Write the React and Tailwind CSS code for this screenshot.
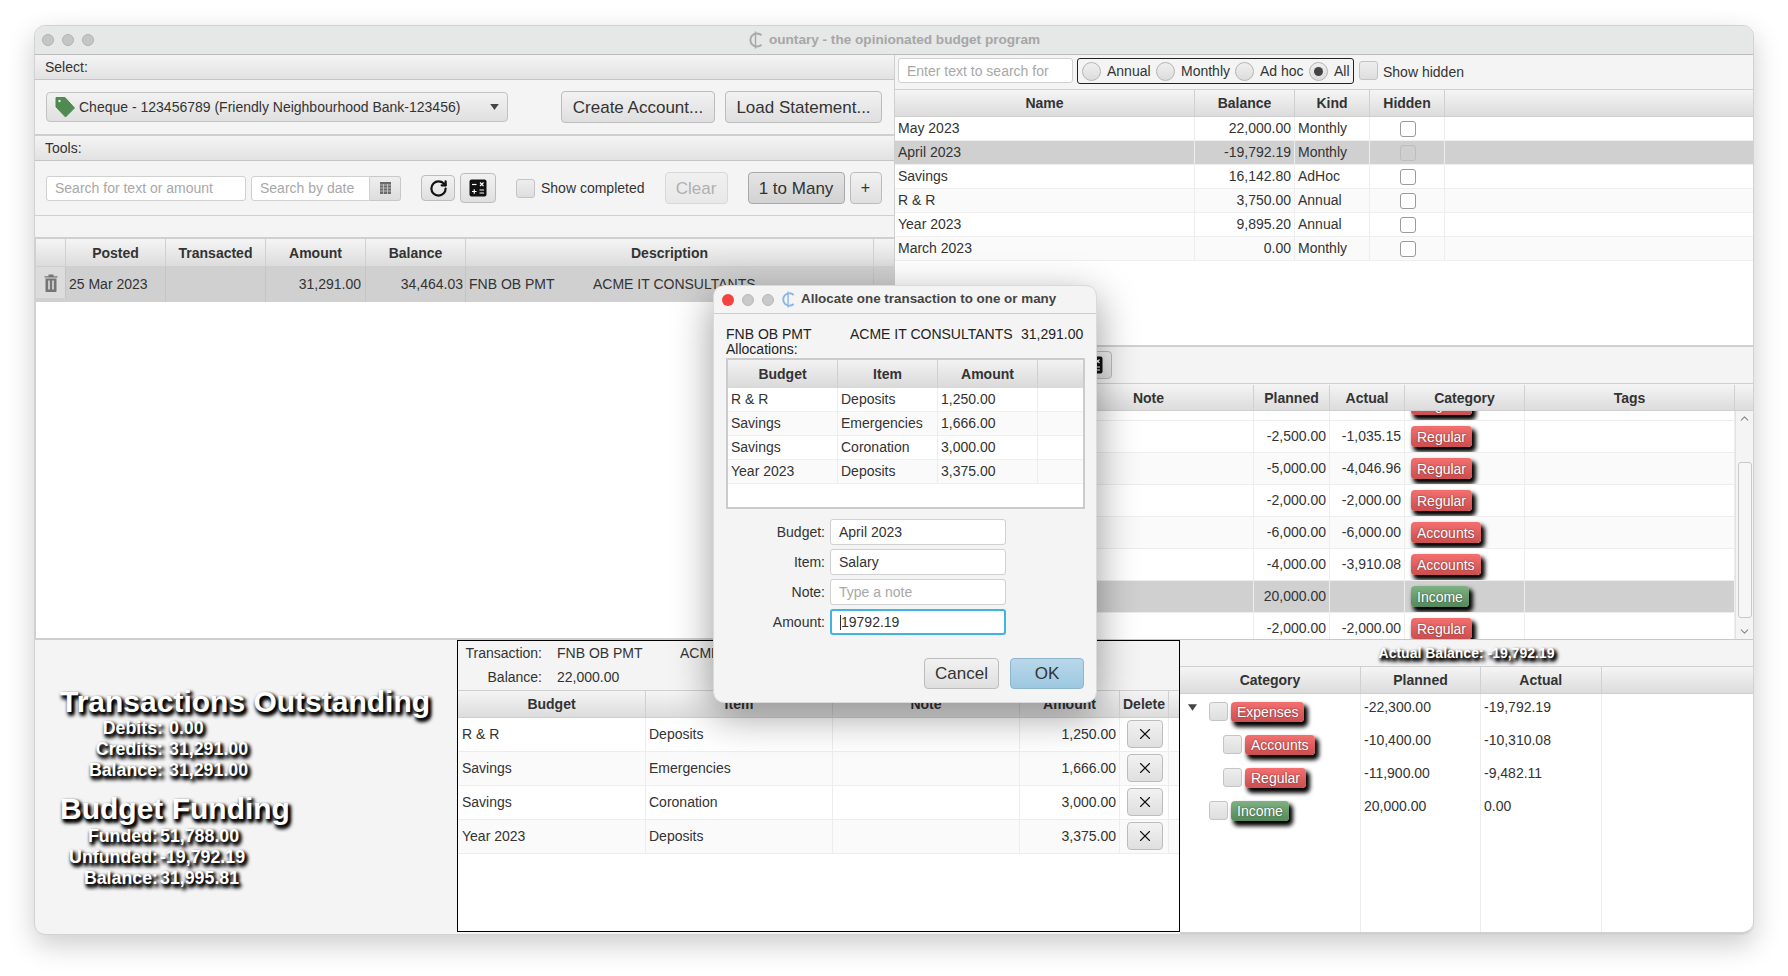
import React from "react";
import { X, ChevronUp, ChevronDown, RotateCw } from "lucide-react";

const HEAD = "flex items-center justify-center border-r border-[#d0d0d0] font-bold text-[14px] text-[#333] pt-[1px]";
const HEADROW = "grid h-[28px] bg-linear-to-b from-[#f5f5f5] to-[#dcdcdc] border-b border-[#cfcfcf] border-t";
const CELL = "flex items-center px-[3px] border-r border-[#ededed] text-[14px] text-[#333] whitespace-nowrap overflow-hidden";
const RIGHT = "justify-end";
const BIG = "font-bold text-white [text-shadow:2px_3px_4px_#000,2px_3px_4px_#000,2px_2px_3px_#000] whitespace-nowrap";

function Btn({ className = "", children }) {
  return (
    <button className={`flex items-center justify-center rounded-[4px] border border-[#bcbcbc] bg-linear-to-b from-[#f2f2f2] to-[#dfdfdf] text-[#333] shrink-0 ${className}`}>
      {children}
    </button>
  );
}
function Check({ className = "" }) {
  return <span className={`block w-[19px] h-[19px] shrink-0 rounded-[3px] border border-[#c4c4c4] bg-linear-to-b from-[#eeeeee] to-[#dedede] ${className}`} />;
}
function HiddenCheck({ dim }) {
  return <span className={`block w-[16px] h-[16px] ml-[2px] rounded-[3px] border ${dim ? "border-[#bdbdbd] bg-[#cfcfcf]" : "border-[#9a9a9a] bg-white"}`} />;
}
function Radio({ on }) {
  return (
    <span className="flex items-center justify-center w-[19px] h-[19px] shrink-0 rounded-full border border-[#b5b5b5] bg-linear-to-b from-[#efefef] to-[#dcdcdc]">
      {on && <span className="block w-[9px] h-[9px] rounded-full bg-[#444]" />}
    </span>
  );
}
function Logo({ className = "", color = "#a9a9a9" }) {
  return (
    <svg viewBox="0 0 16 18" className={className} fill="none" stroke={color} strokeWidth="2">
      <path d="M13.5 4.2A6.6 6.6 0 1 0 13.5 13.8" />
      <path d="M7.5 0.5V17.5" strokeWidth="1.5" />
    </svg>
  );
}
function Tag() {
  return (
    <svg viewBox="0 0 20 22" className="w-[20px] h-[22px] shrink-0">
      <path d="M1 1.5 L10 1.5 L19.5 12 L10.5 21 L1 11 Z" fill="#4f8a50" stroke="#4f8a50" strokeLinejoin="round" />
      <circle cx="4.5" cy="5" r="1.2" fill="#e8efe8" />
    </svg>
  );
}
function Calc() {
  return (
    <svg viewBox="0 0 18 18" className="w-[18px] h-[18px]">
      <rect x="0.5" y="0.5" width="17" height="17" rx="2" fill="#111" />
      <g stroke="#fff" strokeWidth="1.2">
        <path d="M3 5.5H7.5" />
        <path d="M11 3.5L14.5 7M14.5 3.5L11 7" />
        <path d="M3 12.5H7.5M5.25 10.2V14.8" />
        <path d="M10.5 11H15M10.5 14H15" />
      </g>
    </svg>
  );
}
function Trash() {
  return (
    <svg viewBox="0 0 14 18" className="w-[14px] h-[18px]">
      <path d="M0.5 2.2H13.5V3.6H0.5Z M4.5 2.2V0.6H9.5V2.2Z" fill="#757575" />
      <path d="M1.5 4.4H12.5V17.2A.8 .8 0 0 1 11.7 18H2.3A.8 .8 0 0 1 1.5 17.2Z" fill="#757575" />
      <path d="M5 6.5V15.5M9 6.5V15.5" stroke="#dcdcdc" strokeWidth="1.6" />
    </svg>
  );
}
function Caret({ className = "" }) {
  return (
    <svg viewBox="0 0 10 7" className={className}>
      <path d="M0 0H10L5 7Z" fill="#444" />
    </svg>
  );
}
function Badge({ children, green, big }) {
  return (
    <span
      className={`inline-flex items-center rounded-[4px] px-[6px] text-[14px] leading-none text-white shadow-[3px_4px_4px_1px_#000] bg-linear-to-b [text-shadow:0_0_2px_rgba(0,0,0,.5)] ${big ? "h-[21px]" : "h-[20px]"} ${green ? "from-[#7fb182] to-[#55885a]" : "from-[#f47070] to-[#cb4e4e]"}`}
    >
      {children}
    </span>
  );
}

const accounts = [
  ["May 2023", "22,000.00", "Monthly"],
  ["April 2023", "-19,792.19", "Monthly", true],
  ["Savings", "16,142.80", "AdHoc"],
  ["R & R", "3,750.00", "Annual"],
  ["Year 2023", "9,895.20", "Annual"],
  ["March 2023", "0.00", "Monthly"],
];
const items = [
  ["-2,500.00", "-1,035.15", "Regular"],
  ["-5,000.00", "-4,046.96", "Regular"],
  ["-2,000.00", "-2,000.00", "Regular"],
  ["-6,000.00", "-6,000.00", "Accounts"],
  ["-4,000.00", "-3,910.08", "Accounts"],
  ["20,000.00", "", "Income", true],
  ["-2,000.00", "-2,000.00", "Regular"],
];
const allocs = [
  ["R & R", "Deposits", "1,250.00"],
  ["Savings", "Emergencies", "1,666.00"],
  ["Savings", "Coronation", "3,000.00"],
  ["Year 2023", "Deposits", "3,375.00"],
];
const ACCOUNT_COLS = "grid-cols-[300px_100px_75px_75px_1fr]";
const ITEM_COLS = "grid-cols-[149px_210px_76px_75px_120px_210px_1fr]";
const TX_COLS = "grid-cols-[30px_100px_100px_100px_100px_408px_1fr]";
const ALLOC_COLS = "grid-cols-[188px_187px_187px_100px_49px_1fr]";
const DLG_COLS = "grid-cols-[110px_100px_100px_1fr]";
const TREE_COLS = "grid-cols-[181px_120px_120.5px_1fr]";

function Pane({ children }) {
  return (
    <div className="flex items-center h-[25px] pl-[10px] pt-[1px] text-[14px] text-[#333] bg-linear-to-b from-[#f4f4f4] to-[#e2e2e2] border-b border-[#c6c6c6]">
      {children}
    </div>
  );
}
function SubRow({ label, value, w, gap }) {
  return (
    <div className={`flex h-[21px] items-center text-[17.8px] leading-none ${BIG} ${gap}`}>
      <span className={`${w} text-right`}>{label}</span>
      <span>{value}</span>
    </div>
  );
}

function Dialog() {
  return (
    <div className="absolute left-[678px] top-[259px] w-[384px] h-[418px] rounded-[11px] bg-[#f4f4f4] shadow-[0_12px_40px_rgba(0,0,0,.4)] border border-[#dadada] flex flex-col">
      <div className="flex items-center h-[28px] border-b border-[#cdcdcd] pl-[8px]">
        <span className="block w-[12px] h-[12px] rounded-full bg-[#f4433f]" />
        <span className="block w-[12px] h-[12px] rounded-full bg-[#c9c9c9] border border-[#b9b9b9] ml-[8px]" />
        <span className="block w-[12px] h-[12px] rounded-full bg-[#c9c9c9] border border-[#b9b9b9] ml-[8px]" />
        <Logo className="w-[15px] h-[17px] ml-[7px]" color="#88b6ea" />
        <span className="ml-[5px] text-[13.4px] font-bold text-[#444] whitespace-nowrap">Allocate one transaction to one or many</span>
      </div>
      <div className="flex items-center h-[14px] mt-[13px] pl-[12px] text-[14px] text-[#222] whitespace-nowrap">
        <span className="w-[124px]">FNB OB PMT</span>
        <span className="w-[171px]">ACME IT CONSULTANTS</span>
        <span>31,291.00</span>
      </div>
      <div className="h-[16px] pl-[12px] text-[14px] leading-[17px] text-[#222]">Allocations:</div>
      <div className="ml-[12px] mr-[11px] mt-[1px] h-[151px] border-[2px] border-[#cbcbcb] bg-white">
        <div className={`grid ${DLG_COLS} h-[28px] bg-linear-to-b from-[#f3f3f3] to-[#d9d9d9]`}>
          <div className={HEAD}>Budget</div>
          <div className={HEAD}>Item</div>
          <div className={HEAD}>Amount</div>
          <div className="" />
        </div>
        {allocs.map((r, i) => (
          <div key={i} className={`grid ${DLG_COLS} h-[24px] border-b border-[#efefef] ${i % 2 ? "bg-[#fafafa]" : "bg-white"}`}>
            <div className={CELL}>{r[0]}</div>
            <div className={CELL}>{r[1]}</div>
            <div className={CELL}>{r[2]}</div>
            <div />
          </div>
        ))}
      </div>
      <div className="mt-[10px] flex flex-col gap-[4px]">
        {[
          ["Budget:", "April 2023"],
          ["Item:", "Salary"],
          ["Note:", "Type a note", "ph"],
          ["Amount:", "19792.19", "focus"],
        ].map(([l, v, k]) => (
          <div key={l} className="flex items-center h-[26px]">
            <span className="w-[111px] text-right text-[14px] text-[#333]">{l}</span>
            <span
              className={`ml-[5px] flex items-center w-[176px] h-[26px] rounded-[3px] bg-white pl-[8px] text-[14px] ${k === "focus" ? "border-[2px] border-[#3fb4dc] text-[#333] pl-[7px]" : "border border-[#d0d0d0]"} ${k === "ph" ? "text-[#a8a8a8]" : "text-[#333]"}`}
            >
              {k === "focus" && <span className="block w-px h-[15px] bg-[#333]" />}
              {v}
            </span>
          </div>
        ))}
      </div>
      <div className="flex justify-end gap-[11px] pr-[12px] mt-[23px]">
        <Btn className="w-[75px] h-[31px] text-[17px]">Cancel</Btn>
        <button className="w-[74px] h-[31px] rounded-[4px] border border-[#8db6cd] bg-linear-to-b from-[#b9d8ea] to-[#9cc8e0] text-[17px] text-[#333]">OK</button>
      </div>
    </div>
  );
}

export default function App() {
  return (
    <div className="min-h-[976px] bg-white pt-[25px] pl-[34px] font-['Liberation_Sans',Arial,sans-serif]">
      <div className="relative flex flex-col w-[1720px] h-[910px] rounded-t-[11px] rounded-b-[11px] overflow-visible bg-[#f4f4f4] border border-[#d2d2d2] shadow-[0_10px_28px_rgba(0,0,0,.2)]">
        {/* title bar */}
        <div className="relative flex items-center justify-center h-[29px] shrink-0 rounded-t-[11px] bg-[#e6e7e7] border-b border-[#bcbcbc]">
          <div className="absolute left-[7px] top-[8px] flex gap-[8px]">
            <span className="block w-[12px] h-[12px] rounded-full bg-[#c4c6c6] border border-[#b2b4b4]" />
            <span className="block w-[12px] h-[12px] rounded-full bg-[#c4c6c6] border border-[#b2b4b4]" />
            <span className="block w-[12px] h-[12px] rounded-full bg-[#c4c6c6] border border-[#b2b4b4]" />
          </div>
          <Logo className="w-[16px] h-[18px] mr-[5px]" />
          <span className="text-[13.6px] font-bold text-[#a6a6a6] whitespace-nowrap">ountary - the opinionated budget program</span>
        </div>

        {/* upper */}
        <div className="flex h-[585px] shrink-0">
          {/* left */}
          <div className="flex flex-col w-[860px] shrink-0 border-r border-[#cfcfcf]">
            <Pane>Select:</Pane>
            <div className="flex items-center h-[56px] pl-[11px] border-b-[2px] border-[#cfcfcf]">
              <div className="flex items-center w-[462px] h-[30px] rounded-[4px] border border-[#c2c2c2] bg-linear-to-b from-[#f2f2f2] to-[#e0e0e0] pl-[8px] pr-[8px] text-[14px] text-[#333]">
                <Tag />
                <span className="ml-[4px] whitespace-nowrap">Cheque - 123456789 (Friendly Neighbourhood Bank-123456)</span>
                <Caret className="ml-auto w-[9px] h-[6px]" />
              </div>
              <Btn className="ml-[53px] w-[154px] h-[32px] pt-[1px] text-[17px]">Create Account...</Btn>
              <Btn className="ml-[10px] w-[157px] h-[32px] pt-[1px] text-[17px]">Load Statement...</Btn>
            </div>
            <Pane>Tools:</Pane>
            <div className="flex items-center h-[55px] pl-[11px] border-b border-[#cfcfcf]">
              <span className="flex items-center w-[200px] h-[25px] rounded-[3px] border border-[#d0d0d0] bg-white pl-[8px] text-[14px] text-[#a8a8a8]">Search for text or amount</span>
              <span className="ml-[5px] flex items-center w-[119px] h-[25px] rounded-l-[3px] border border-[#d0d0d0] bg-white pl-[8px] text-[14px] text-[#a8a8a8]">Search by date</span>
              <span className="flex items-center justify-center w-[31px] h-[25px] rounded-r-[3px] border border-l-0 border-[#c8c8c8] bg-linear-to-b from-[#efefef] to-[#dddddd]">
                <svg viewBox="0 0 11 12" className="w-[11px] h-[12px]">
                  <path d="M0 0H11V12H0Z" fill="#6a6a6a" />
                  <path d="M0 3H11M0 6H11M0 9H11M3.5 2V12M7.5 2V12" stroke="#d8d8d8" strokeWidth=".7" />
                </svg>
              </span>
              <Btn className="ml-[20px] w-[34px] h-[26px]"><RotateCw size={19} strokeWidth={2.8} color="#111" /></Btn>
              <Btn className="ml-[5px] w-[36px] h-[30px]"><Calc /></Btn>
              <Check className="ml-[20px]" />
              <span className="ml-[6px] text-[14px] text-[#333] whitespace-nowrap">Show completed</span>
              <Btn className="ml-[20px] w-[63px] h-[32px] pt-[1px] text-[17px] !text-[#b0b0b0] !border-[#d8d8d8] !from-[#f0f0f0] !to-[#e8e8e8]">Clear</Btn>
              <Btn className="ml-[20px] w-[97px] h-[32px] pt-[1px] text-[17px] !from-[#e4e4e4] !to-[#d2d2d2] !border-[#a9a9a9]">1 to Many</Btn>
              <Btn className="ml-[5px] w-[32px] h-[32px] text-[16px]">+</Btn>
            </div>
            <div className="h-[23px] shrink-0 border-b-[2px] border-[#cfcfcf]" />
            <div className="flex-1 flex flex-col border-b-[2px] border-l border-[#cfcfcf] bg-white">
              <div className={`grid ${TX_COLS} h-[28px] bg-linear-to-b from-[#f5f5f5] to-[#dcdcdc] border-b border-[#cfcfcf]`}>
                <div className={HEAD} />
                <div className={HEAD}>Posted</div>
                <div className={HEAD}>Transacted</div>
                <div className={HEAD}>Amount</div>
                <div className={HEAD}>Balance</div>
                <div className={HEAD}>Description</div>
                <div />
              </div>
              <div className={`grid ${TX_COLS} h-[35px] bg-[#d0d0d0]`}>
                <div className="flex items-center justify-center bg-[#dcdcdc] mb-[4px] border-r border-[#c4c4c4]"><Trash /></div>
                <div className="flex items-center pl-[3px] border-r border-[#c4c4c4] text-[14px] text-[#333] whitespace-nowrap">25 Mar 2023</div>
                <div className="border-r border-[#c4c4c4]" />
                <div className="flex items-center justify-end pr-[4px] border-r border-[#c4c4c4] text-[14px] text-[#333]">31,291.00</div>
                <div className="flex items-center justify-end pr-[2px] border-r border-[#c4c4c4] text-[14px] text-[#333]">34,464.03</div>
                <div className="flex items-center pl-[3px] border-r border-[#c4c4c4] text-[14px] text-[#333] whitespace-nowrap">
                  <span className="w-[124px]">FNB OB PMT</span>
                  <span>ACME IT CONSULTANTS</span>
                </div>
                <div />
              </div>
            </div>
          </div>

          {/* right */}
          <div className="flex flex-col flex-1 min-w-0">
            <div className="flex items-start h-[34px] shrink-0 pl-[3px] pt-[3px]">
              <span className="flex items-center w-[175px] h-[25px] rounded-[3px] border border-[#d0d0d0] bg-white pl-[8px] pt-[1px] text-[14px] text-[#a8a8a8]">Enter text to search for</span>
              <div className="ml-[4px] flex items-center w-[277px] h-[26px] rounded-[3px] border border-[#222] pl-[4px] text-[14px] text-[#333] whitespace-nowrap">
                <Radio /><span className="ml-[6px] w-[49px]">Annual</span>
                <Radio /><span className="ml-[6px] w-[54px]">Monthly</span>
                <Radio /><span className="ml-[6px] w-[49px]">Ad hoc</span>
                <Radio on /><span className="ml-[6px]">All</span>
              </div>
              <Check className="ml-[5px] mt-[3px]" />
              <span className="ml-[5px] mt-[4px] text-[14px] text-[#333] whitespace-nowrap">Show hidden</span>
            </div>
            <div className="h-[258px] shrink-0 bg-white border-b-[2px] border-[#d0d0d0]">
              <div className={`${HEADROW} ${ACCOUNT_COLS}`}>
                <div className={HEAD}>Name</div>
                <div className={HEAD}>Balance</div>
                <div className={HEAD}>Kind</div>
                <div className={HEAD}>Hidden</div>
                <div />
              </div>
              {accounts.map((r, i) => (
                <div key={i} className={`grid ${ACCOUNT_COLS} h-[24px] border-b border-[#efefef] ${r[3] ? "bg-[#d0d0d0]" : i % 2 ? "bg-[#fafafa]" : "bg-white"}`}>
                  <div className={CELL}>{r[0]}</div>
                  <div className={`${CELL} ${RIGHT}`}>{r[1]}</div>
                  <div className={CELL}>{r[2]}</div>
                  <div className={`${CELL} justify-center`}><HiddenCheck dim={r[3]} /></div>
                  <div />
                </div>
              ))}
            </div>
            <div className="flex items-center h-[36px] shrink-0 justify-end pr-[641px]">
              <Btn className="w-[36px] h-[28px]"><Calc /></Btn>
            </div>
            <div className="flex-1 flex flex-col min-h-0 border-b border-[#c9c9c9]">
              <div className={`${HEADROW} ${ITEM_COLS} pt-[1px]`}>
                <div className={HEAD} />
                <div className={HEAD}>Note</div>
                <div className={HEAD}>Planned</div>
                <div className={HEAD}>Actual</div>
                <div className={HEAD}>Category</div>
                <div className={HEAD}>Tags</div>
                <div />
              </div>
              <div className="flex flex-1 min-h-0 bg-white">
                <div className="flex-1 min-w-0 overflow-hidden">
                  <div className={`grid ${ITEM_COLS} h-[32px] -mt-[22px] border-b border-[#ededed]`}>
                    <div className={CELL} /><div className={CELL} /><div className={CELL} /><div className={CELL} />
                    <div className="flex items-center pl-[6px] border-r border-[#ededed] overflow-hidden"><Badge big>Regular</Badge></div>
                    <div className={CELL} />
                  </div>
                  {items.map((r, i) => (
                    <div key={i} className={`grid ${ITEM_COLS} h-[32px] border-b border-[#ededed] ${r[3] ? "bg-[#d0d0d0]" : i % 2 ? "bg-[#fafafa]" : "bg-white"}`}>
                      <div className={CELL} />
                      <div className={CELL} />
                      <div className={`${CELL} ${RIGHT}`}>{r[0]}</div>
                      <div className={`${CELL} ${RIGHT}`}>{r[1]}</div>
                      <div className="flex items-center pl-[6px] border-r border-[#ededed] overflow-hidden"><Badge big green={r[3]}>{r[2]}</Badge></div>
                      <div className={CELL} />
                    </div>
                  ))}
                </div>
                <div className="flex flex-col items-center w-[18px] shrink-0 bg-[#f4f4f4] border-l border-[#e2e2e2] -ml-[18px] z-0">
                  <ChevronUp size={13} color="#888" className="mt-[1px]" />
                  <span className="block w-[14px] h-[156px] mt-[37px] rounded-[3px] border border-[#c8c8c8] bg-[#f6f6f6]" />
                  <ChevronDown size={13} color="#888" className="mt-[7px]" />
                </div>
              </div>
            </div>
          </div>
        </div>

        {/* lower */}
        <div className="flex flex-1 min-h-0">
          <div className="w-[422px] shrink-0 pl-[25px] pt-[45px]">
            <div className={`h-[33px] text-[30px] leading-[34px] ${BIG}`}>Transactions Outstanding</div>
            <SubRow label="Debits:" value="0.00" w="w-[103px]" gap="gap-[6px]" />
            <SubRow label="Credits:" value="31,291.00" w="w-[103px]" gap="gap-[6px]" />
            <SubRow label="Balance:" value="31,291.00" w="w-[103px]" gap="gap-[6px]" />
            <div className={`mt-[11px] h-[34px] text-[30px] leading-[34px] ${BIG}`}>Budget Funding</div>
            <SubRow label="Funded:" value="51,788.00" w="w-[98px]" gap="gap-[2px]" />
            <SubRow label="Unfunded:" value="-19,792.19" w="w-[98px]" gap="gap-[2px]" />
            <SubRow label="Balance:" value="31,995.81" w="w-[98px]" gap="gap-[2px]" />
          </div>
          <div className="flex flex-col w-[723px] shrink-0 mb-[2px] border-[1.5px] border-black bg-[#f4f4f4]">
            <div className="grid grid-cols-[84px_123px_1fr] h-[24px] items-center text-[14px] text-[#333]">
              <span className="text-right">Transaction:</span>
              <span className="pl-[15px] whitespace-nowrap">FNB OB PMT</span>
              <span className="pl-[15px] whitespace-nowrap">ACME IT CONSULTANTS</span>
            </div>
            <div className="grid grid-cols-[84px_123px_1fr] h-[25px] items-center text-[14px] text-[#333]">
              <span className="text-right">Balance:</span>
              <span className="pl-[15px]">22,000.00</span>
            </div>
            <div className={`${HEADROW} ${ALLOC_COLS}`}>
              <div className={HEAD}>Budget</div>
              <div className={HEAD}>Item</div>
              <div className={HEAD}>Note</div>
              <div className={HEAD}>Amount</div>
              <div className={HEAD}>Delete</div>
              <div />
            </div>
            <div className="flex-1 bg-white">
              {allocs.map((r, i) => (
                <div key={i} className={`grid ${ALLOC_COLS} h-[34px] border-b border-[#ededed] ${i % 2 ? "bg-[#fafafa]" : "bg-white"}`}>
                  <div className={`${CELL} !pl-[4px]`}>{r[0]}</div>
                  <div className={CELL}>{r[1]}</div>
                  <div className={CELL} />
                  <div className={`${CELL} ${RIGHT}`}>{r[2]}</div>
                  <div className="flex items-center justify-center pb-[2px] pl-[1px] border-r border-[#ededed]">
                    <Btn className="w-[36px] h-[28px]"><X size={18} strokeWidth={1.5} color="#111" /></Btn>
                  </div>
                  <div />
                </div>
              ))}
            </div>
          </div>
          <div className="flex flex-col flex-1 min-w-0">
            <div className={`flex items-center justify-center h-[26px] text-[14px] ${BIG}`}>Actual Balance: -19,792.19</div>
            <div className={`${HEADROW} ${TREE_COLS}`}>
              <div className={HEAD}>Category</div>
              <div className={HEAD}>Planned</div>
              <div className={HEAD}>Actual</div>
              <div />
            </div>
            <div className={`grid flex-1 ${TREE_COLS} bg-white rounded-br-[11px] border-b-[2px] border-[#cfcfcf]`}>
              <div className="border-r border-[#ededed] pt-[1px]">
                {[
                  ["Expenses", 0, false, true],
                  ["Accounts", 1],
                  ["Regular", 1],
                  ["Income", 0, true],
                ].map(([l, lvl, g, car]) => (
                  <div key={l} className={`flex items-center h-[33px] ${lvl ? "pl-[43px]" : "pl-[29px]"} relative`}>
                    {car && <Caret className="absolute left-[8px] top-[9px] w-[9px] h-[7px]" />}
                    <Check />
                    <span className="ml-[3px] flex"><Badge green={g}>{l}</Badge></span>
                  </div>
                ))}
              </div>
              <div className="border-r border-[#ededed] text-[14px] text-[#333] pl-[3px]">
                {["-22,300.00", "-10,400.00", "-11,900.00", "20,000.00"].map((v) => (
                  <div key={v} className="h-[33px] leading-[26px]">{v}</div>
                ))}
              </div>
              <div className="border-r border-[#ededed] text-[14px] text-[#333] pl-[3px]">
                {["-19,792.19", "-10,310.08", "-9,482.11", "0.00"].map((v) => (
                  <div key={v} className="h-[33px] leading-[26px]">{v}</div>
                ))}
              </div>
              <div />
            </div>
          </div>
        </div>

        <Dialog />
      </div>
    </div>
  );
}
